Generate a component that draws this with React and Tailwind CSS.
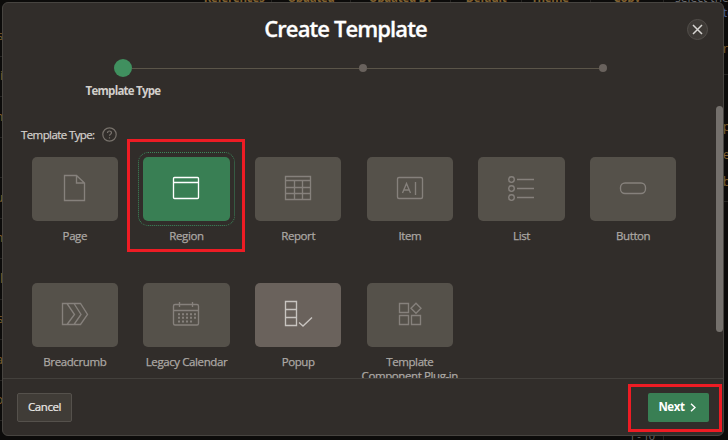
import React from "react";

const PageIcon = () => (
  <path d="M5.500 3.500h12l8 7.500v17.500h-20zM17.500 3.500v7.500h8" />
);
const RegionIcon = () => (
  <>
    <rect x="3.500" y="5.500" width="25" height="21" rx="1" />
    <path d="M3.500 10.500h25" />
  </>
);
const ReportIcon = () => (
  <path d="M3.500 4.500h25v23h-25zM3.500 8.500h25M3.500 15.500h25M3.500 21.500h25M12.500 8.500v19M20.500 8.500v19" />
);
const ItemIcon = () => (
  <>
    <rect x="3.500" y="5.500" width="25" height="21" rx="1.500" />
    <path d="M8.500 21l4-9.500 4 9.500M10 18h5M21.500 10v13" />
  </>
);
const ListIcon = () => (
  <>
    <circle cx="6.500" cy="7.500" r="2.800" />
    <circle cx="6.500" cy="16.500" r="2.800" />
    <circle cx="6.500" cy="25.500" r="2.800" />
    <path d="M12 7.500h17M12 16.500h17M12 25.500h17" />
  </>
);
const ButtonIcon = () => (
  <rect x="3.500" y="11" width="25" height="10.500" rx="4.500" />
);
const BreadcrumbIcon = () => (
  <path d="M3.500 5.500h18l7 11-7 10h-18zM8 5.500l7.500 11-7.500 10M15 5.500l7 11-7 10" />
);
const CalendarIcon = () => (
  <>
    <rect x="3.500" y="6.500" width="25" height="20.500" rx="1.500" />
    <path d="M3.500 12.500h25M9.500 4v5M22.500 4v5" />
    <path strokeWidth="2" strokeDasharray="2 2" d="M8 16.200h18M8 19.800h18M8 23.400h14" />
  </>
);
const PopupIcon = () => (
  <path d="M3.500 3.500h11v24h-11zM3.500 11.500h11M3.500 19.500h11M17 24.500l4 3.500 9-8.500" />
);
const PluginIcon = () => (
  <path d="M5.500 5.500h9v9h-9zM5.500 17.500h9v9h-9zM17.500 17.500h9v9h-9zM22 5.300l5 5-5 5-5-5z" />
);

const types = [
  { name: "Page", icon: PageIcon },
  { name: "Region", icon: RegionIcon, selected: true },
  { name: "Report", icon: ReportIcon },
  { name: "Item", icon: ItemIcon },
  { name: "List", icon: ListIcon },
  { name: "Button", icon: ButtonIcon },
  { name: "Breadcrumb", icon: BreadcrumbIcon },
  { name: "Legacy Calendar", icon: CalendarIcon },
  { name: "Popup", icon: PopupIcon, hover: true },
  { name: "Template Component Plug-in", icon: PluginIcon },
];

function TypeTile({ type }) {
  const Icon = type.icon;
  const colour = type.selected
    ? "bg-[#397f54] text-white outline outline-1 outline-dotted outline-[#3c8a5c] outline-offset-4"
    : type.hover
      ? "bg-[#6a625c] text-[#c8c4c0]"
      : "bg-[#55514a] text-[#86817c]";
  return (
    <div className="flex h-[126px] flex-col items-center">
      <div className={`flex h-16 w-[86.500px] shrink-0 items-center justify-center rounded-[5px] pb-0.5 ${colour}`}>
        <svg className="size-8" viewBox="0 0 32 32" fill="none" stroke="currentColor" strokeWidth="1.350">
          <Icon />
        </svg>
      </div>
      <span className="mt-2 w-[108px] text-center text-[11.500px] leading-[14px] font-medium tracking-[-0.4px] text-[#aca8a4] [-webkit-text-stroke:0.25px]">
        {type.name}
      </span>
    </div>
  );
}

const columns = [
  { name: "References", cell: "w-[97px] pl-[22px]" },
  { name: "Updated", cell: "w-[79px]" },
  { name: "Updated By", cell: "w-[100px]" },
  { name: "Default", cell: "w-[71px]" },
  { name: "Theme", cell: "w-[69px] pr-3" },
  { name: "Copy", cell: "w-[73px]" },
];
const rowNames = ["s", "i", "n", "", "u", "n", "ll", "s", "a", "o"];

function Backdrop() {
  return (
    <div className="absolute inset-0 overflow-hidden bg-[#0c0b0a] text-[12px] text-[#80602f]">
      <div className="absolute -top-[10px] left-[175px] flex h-4">
        {columns.map((c) => (
          <div key={c.name} className={`${c.cell} shrink-0 border-r border-[#252321] text-center text-[11.500px] leading-4 font-bold tracking-[-0.3px] whitespace-nowrap`}>
            {c.name}
          </div>
        ))}
        <div className="pl-[11px] leading-4 whitespace-nowrap text-[#686a70]">select the t</div>
      </div>
      <div className="flex w-[6px] flex-col pt-4">
        {rowNames.map((n, i) => (
          <div key={i} className="flex h-[40.500px] w-[3px] items-center justify-end border-b border-[#252321]">
            {n}
          </div>
        ))}
      </div>
      <div className="absolute top-0 left-[723px] flex flex-col pt-[5px] leading-4 whitespace-nowrap">
        <span className="text-[#4c5d91]">to</span>
        <span className="mt-5">re</span>
        <span className="mt-[17px] h-px w-2 bg-[#252321]" />
        <span className="mt-[44px]">p</span>
        <span className="mt-3">er</span>
        <span className="mt-[11px]">b</span>
        <span className="mt-[11px] h-px w-2 bg-[#252321]" />
      </div>
      <div className="absolute top-[428px] left-[629px] h-4 w-[35px] border-r border-[#252321] text-[11px] leading-4 tracking-[-0.4px] text-[#696663]">1 - 10</div>
    </div>
  );
}

function Train() {
  return (
    <div className="mx-[80px] flex h-[57px] flex-col items-start">
      <div className="ml-[31px] flex h-[18px] items-center">
        <div className="size-[18px] rounded-full bg-[#40905f]" />
        <div className="h-px w-[227px] bg-[#5b5549]" />
        <div className="size-2 rounded-full bg-[#69625d]" />
        <div className="h-px w-[232px] bg-[#5b5549]" />
        <div className="size-2 rounded-full bg-[#69625d]" />
      </div>
      <div className="mt-1.5 w-[80px] text-center text-[11.500px] font-bold leading-4 tracking-[-0.75px] whitespace-nowrap text-[#d2cfcb]">
        <span className="inline-block">Template Type</span>
      </div>
    </div>
  );
}

export default function App() {
  return (
    <div className="relative h-[440px] w-[728px] overflow-hidden font-['Open_Sans',sans-serif]">
      <Backdrop />
      <div className="absolute top-[2px] left-[2px] flex h-[434px] w-[722px] flex-col overflow-hidden rounded-md border border-[#474440] bg-[#312d2a]">
        <div className="grid h-14 shrink-0 grid-cols-[36px_1fr_36px] items-center">
          <span />
          <h1 className="mb-[6px] pr-[35px] text-center text-[22px] font-semibold leading-7 tracking-[-0.9px] text-white [-webkit-text-stroke:0.3px]">Create Template</h1>
          <button className="mr-[15px] mb-[3px] flex size-[21px] items-center justify-center justify-self-end rounded-full border border-[#524e4a] bg-[#3e3a36] text-[#d7d5d2]">
            <svg className="size-[11px]" viewBox="0 0 11 11" stroke="currentColor" strokeWidth="1.500">
              <path d="M1 1l9 9M10 1l-9 9" />
            </svg>
          </button>
        </div>
        <Train />
        <div className="flex min-h-0 flex-1">
          <div className="w-[713px] overflow-hidden pt-[11px]">
            <div className="flex h-[15px] items-center gap-[7px] pl-[18px]">
              <span className="text-[11.500px] font-medium leading-[15px] tracking-[-0.6px] text-[#d2cfcb] [-webkit-text-stroke:0.25px]">Template Type:</span>
              <svg className="size-[15px] text-[#77716b]" viewBox="0 0 15 15" fill="none" stroke="currentColor" strokeWidth="1.200">
                <circle cx="7.500" cy="7.500" r="6.700" />
                <path d="M5.500 6c0-2.600 4-2.600 4-.2 0 1.500-2 1.400-2 3M7.500 10.200v1.200" />
              </svg>
            </div>
            <div className="mt-[15px] ml-4 grid w-[670px] grid-cols-6">
              {types.map((t) => (
                <TypeTile key={t.name} type={t} />
              ))}
            </div>
          </div>
          <div className="mt-[-10px] h-[226px] w-[7px] rounded-full bg-[#74706c]" />
        </div>
        <div className="flex h-[57px] shrink-0 items-center justify-between border-t border-[#43403c] px-[14px]">
          <button className="h-[29px] w-[55px] rounded-[2px] border border-[#55514c] bg-[#403c37] text-[11.500px] font-medium tracking-[-0.4px] text-[#eceae7] [-webkit-text-stroke:0.2px]">
            Cancel
          </button>
          <button className="flex h-[29px] w-[61px] items-center justify-center gap-[5px] rounded-[2px] bg-[#397f54] pr-[3px] text-[11.500px] font-bold tracking-[-0.4px] text-white">
            Next
            <svg className="h-[9px] w-[6px]" viewBox="0 0 6 9" fill="none" stroke="currentColor" strokeWidth="1.400">
              <path d="M1 .7l4 3.800-4 3.800" />
            </svg>
          </button>
        </div>
      </div>
      <div className="absolute top-[139px] left-[127px] h-[113px] w-[118px] border-[3px] border-[#ed1c24]" />
      <div className="absolute top-[384px] left-[628px] h-[48px] w-[94px] border-[3px] border-[#ed1c24]" />
    </div>
  );
}
